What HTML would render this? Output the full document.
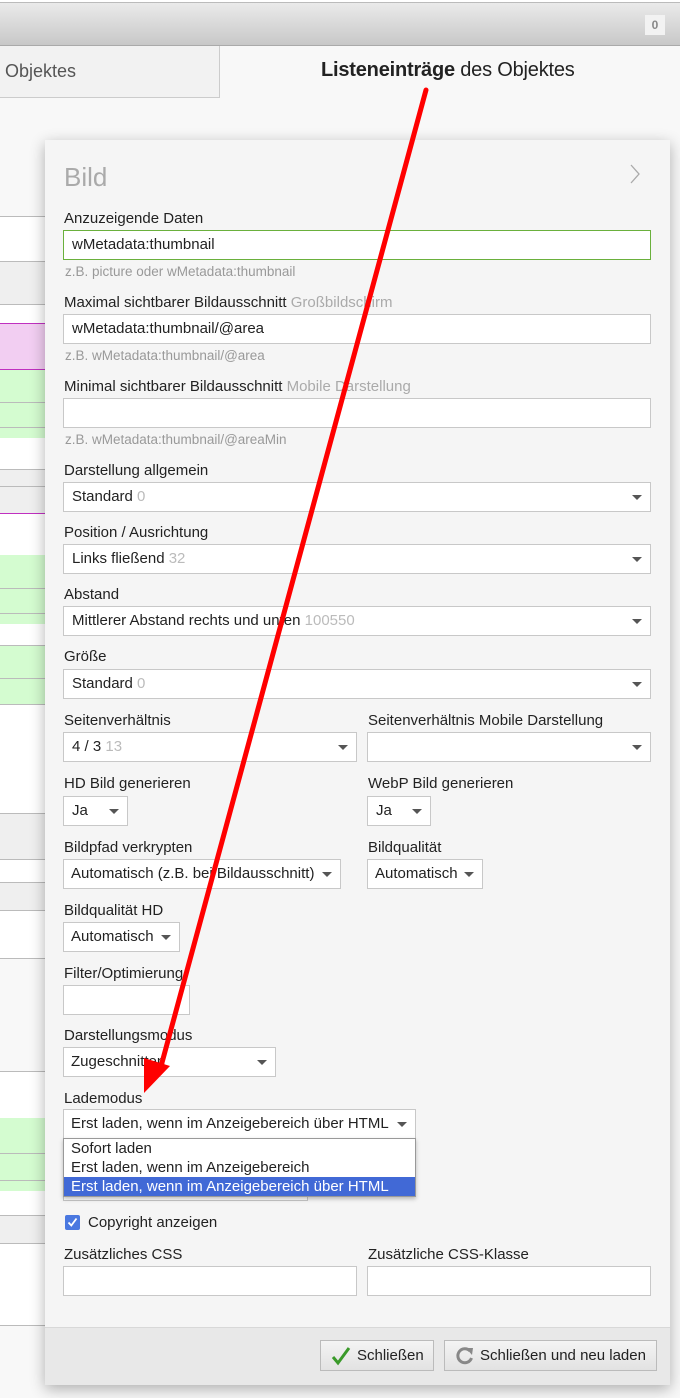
<!DOCTYPE html>
<html><head><meta charset="utf-8"><style>
*{box-sizing:border-box;margin:0;padding:0}
body{width:680px;height:1398px;overflow:hidden;background:#f8f8f8;font-family:"Liberation Sans",Arial,sans-serif;font-size:15px;color:#222;position:relative}
.a{position:absolute}
.row{position:absolute;left:0;width:60px}
.lbl{position:absolute;left:64px;font-size:15px;color:#222;white-space:nowrap}
.lbl span{color:#aaa}
.hint{position:absolute;left:65px;font-size:13.5px;color:#999}
.inp{position:absolute;height:30px;background:#fff;border:1px solid #c8c8c8;padding:0 8px;line-height:28px;font-size:15px;white-space:nowrap;overflow:hidden}
.inp span{color:#bbb}
.sel::after{content:"";position:absolute;right:8px;top:12px;border-left:5px solid transparent;border-right:5px solid transparent;border-top:5px solid #555}
.btn{position:absolute;top:1340px;height:31px;border:1px solid #bbb;background:linear-gradient(#f4f4f4,#e2e2e2);font-size:15px;line-height:29px;color:#222;white-space:nowrap}
</style></head><body>
<div class="row" style="top:97px;height:119px;background:#f8f8f8"></div>
<div class="row" style="top:216px;height:45px;background:#fff;border-top:1px solid #bbb"></div>
<div class="row" style="top:261px;height:43px;background:#efefef;border-top:1px solid #bbb"></div>
<div class="row" style="top:304px;height:19px;background:#fff;border-top:1px solid #bbb"></div>
<div class="row" style="top:323px;height:47px;background:#f2cef2;border-top:1px solid #c030c0;border-bottom:1px solid #c030c0"></div>
<div class="row" style="top:370px;height:33px;background:#d4fcd0;border-bottom:1px solid #bbb"></div>
<div class="row" style="top:403px;height:25px;background:#d4fcd0;border-bottom:1px solid #bbb"></div>
<div class="row" style="top:428px;height:10px;background:#d4fcd0"></div>
<div class="row" style="top:438px;height:31px;background:#fff"></div>
<div class="row" style="top:469px;height:17px;background:#efefef;border-top:1px solid #bbb"></div>
<div class="row" style="top:486px;height:27px;background:#efefef;border-top:1px solid #bbb"></div>
<div class="row" style="top:513px;height:42px;background:#fff;border-top:1px solid #c030c0"></div>
<div class="row" style="top:555px;height:34px;background:#d4fcd0;border-bottom:1px solid #bbb"></div>
<div class="row" style="top:589px;height:25px;background:#d4fcd0;border-bottom:1px solid #bbb"></div>
<div class="row" style="top:614px;height:10px;background:#d4fcd0"></div>
<div class="row" style="top:624px;height:21px;background:#fff"></div>
<div class="row" style="top:645px;height:34px;background:#d4fcd0;border-top:1px solid #bbb;border-bottom:1px solid #bbb"></div>
<div class="row" style="top:679px;height:26px;background:#d4fcd0;border-bottom:1px solid #bbb"></div>
<div class="row" style="top:705px;height:108px;background:#fff"></div>
<div class="row" style="top:813px;height:46px;background:#efefef;border-top:1px solid #bbb"></div>
<div class="row" style="top:859px;height:23px;background:#fff;border-top:1px solid #bbb"></div>
<div class="row" style="top:882px;height:28px;background:#efefef;border-top:1px solid #bbb"></div>
<div class="row" style="top:910px;height:48px;background:#fff;border-top:1px solid #bbb"></div>
<div class="row" style="top:958px;height:113px;background:#f8f8f8;border-top:1px solid #bbb"></div>
<div class="row" style="top:1071px;height:47px;background:#fff;border-top:1px solid #bbb"></div>
<div class="row" style="top:1118px;height:36px;background:#d4fcd0;border-bottom:1px solid #bbb"></div>
<div class="row" style="top:1154px;height:27px;background:#d4fcd0;border-bottom:1px solid #bbb"></div>
<div class="row" style="top:1181px;height:10px;background:#d4fcd0"></div>
<div class="row" style="top:1191px;height:24px;background:#fff"></div>
<div class="row" style="top:1215px;height:28px;background:#efefef;border-top:1px solid #bbb"></div>
<div class="row" style="top:1243px;height:82px;background:#fff;border-top:1px solid #bbb"></div>
<div class="row" style="top:1325px;height:73px;background:#f8f8f8;border-top:1px solid #bbb"></div>

<div class="a" style="left:0;top:0;width:680px;height:46px;background:linear-gradient(#eaeaea,#c8c8c8);border-top:3px solid #fff;border-bottom:1px solid #aaa"></div>
<div class="a" style="left:0;top:2px;width:680px;height:1px;background:#bbb"></div>
<div class="a" style="left:645px;top:15px;width:20px;height:20px;background:#f2f2f2;color:#888;font-size:12px;font-weight:bold;text-align:center;line-height:20px">0</div>
<div class="a" style="left:0;top:46px;width:220px;height:52px;background:#f2f2f2;border-right:1px solid #ccc;border-bottom:1px solid #ccc;font-size:18px;line-height:50px;padding-left:5px;color:#555">Objektes</div>
<div class="a" style="left:321px;top:59px;font-size:20px;color:#222;white-space:nowrap;letter-spacing:-0.2px"><b>Listeneinträge</b> des Objektes</div>

<div class="a" style="left:45px;top:140px;width:625px;height:1245px;background:#f5f5f5;box-shadow:0 4px 14px rgba(0,0,0,.3)"></div>
<div class="a" style="left:45px;top:1327px;width:625px;height:58px;background:#e8e8e8;border-top:1px solid #d8d8d8"></div>
<div class="a" style="left:64px;top:162px;font-size:26px;color:#aaa">Bild</div>
<svg class="a" style="left:628px;top:163px" width="14" height="22"><path d="M3 2 L11 11 L3 20" fill="none" stroke="#aaa" stroke-width="1.3"/></svg>

<div class="lbl" style="top:210px">Anzuzeigende Daten</div>
<div class="inp" style="left:63px;top:230px;width:588px;border-color:#6ab03c">wMetadata:thumbnail</div>
<div class="hint" style="top:264px">z.B. picture oder wMetadata:thumbnail</div>

<div class="lbl" style="top:294px">Maximal sichtbarer Bildausschnitt <span>Großbildschirm</span></div>
<div class="inp" style="left:63px;top:314px;width:588px">wMetadata:thumbnail/@area</div>
<div class="hint" style="top:348px">z.B. wMetadata:thumbnail/@area</div>

<div class="lbl" style="top:378px">Minimal sichtbarer Bildausschnitt <span>Mobile Darstellung</span></div>
<div class="inp" style="left:63px;top:398px;width:588px"></div>
<div class="hint" style="top:432px">z.B. wMetadata:thumbnail/@areaMin</div>

<div class="lbl" style="top:462px">Darstellung allgemein</div>
<div class="inp sel" style="left:63px;top:482px;width:588px">Standard <span>0</span></div>
<div class="lbl" style="top:524px">Position / Ausrichtung</div>
<div class="inp sel" style="left:63px;top:544px;width:588px">Links fließend <span>32</span></div>
<div class="lbl" style="top:586px">Abstand</div>
<div class="inp sel" style="left:63px;top:606px;width:588px">Mittlerer Abstand rechts und unten <span>100550</span></div>
<div class="lbl" style="top:648px">Größe</div>
<div class="inp sel" style="left:63px;top:669px;width:588px">Standard <span>0</span></div>

<div class="lbl" style="top:712px">Seitenverhältnis</div>
<div class="lbl" style="top:712px;left:368px">Seitenverhältnis Mobile Darstellung</div>
<div class="inp sel" style="left:63px;top:732px;width:294px">4 / 3 <span>13</span></div>
<div class="inp sel" style="left:367px;top:732px;width:284px"></div>

<div class="lbl" style="top:775px">HD Bild generieren</div>
<div class="lbl" style="top:775px;left:368px">WebP Bild generieren</div>
<div class="inp sel" style="left:63px;top:796px;width:65px">Ja</div>
<div class="inp sel" style="left:367px;top:796px;width:64px">Ja</div>

<div class="lbl" style="top:839px">Bildpfad verkrypten</div>
<div class="lbl" style="top:839px;left:368px">Bildqualität</div>
<div class="inp sel" style="left:63px;top:859px;width:278px;padding-left:7px;padding-right:20px">Automatisch (z.B. bei Bildausschnitt)</div>
<div class="inp sel" style="left:367px;top:859px;width:116px;padding-left:7px">Automatisch</div>

<div class="lbl" style="top:902px">Bildqualität HD</div>
<div class="inp sel" style="left:63px;top:922px;width:117px;padding-left:7px">Automatisch</div>
<div class="lbl" style="top:965px">Filter/Optimierung</div>
<div class="inp" style="left:63px;top:985px;width:127px"></div>
<div class="lbl" style="top:1027px">Darstellungsmodus</div>
<div class="inp sel" style="left:63px;top:1047px;width:213px;padding-left:7px">Zugeschnitten</div>
<div class="lbl" style="top:1090px">Lademodus</div>
<div class="inp" style="left:63px;top:1170px;width:245px;height:31px"></div>
<div class="inp sel" style="left:63px;top:1109px;width:353px;padding-left:7px">Erst laden, wenn im Anzeigebereich über HTML</div>
<div class="a" style="left:63px;top:1138px;width:353px;height:59px;background:#fff;border:1px solid #999;box-shadow:0 2px 4px rgba(0,0,0,.25);font-size:15px;line-height:19px">
<div style="padding-left:7px">Sofort laden</div>
<div style="padding-left:7px">Erst laden, wenn im Anzeigebereich</div>
<div style="padding-left:7px;background:#4169d6;color:#fff">Erst laden, wenn im Anzeigebereich über HTML</div>
</div>

<div class="a" style="left:65px;top:1215px;width:15px;height:15px;background:#4a78e0;border-radius:2px"></div>
<svg class="a" style="left:65px;top:1215px" width="15" height="15"><path d="M3.5 7.5 L6.3 10.5 L11.5 3.5" fill="none" stroke="#fff" stroke-width="1.8"/></svg>
<div class="lbl" style="top:1214px;left:88px">Copyright anzeigen</div>

<div class="lbl" style="top:1246px">Zusätzliches CSS</div>
<div class="lbl" style="top:1246px;left:368px">Zusätzliche CSS-Klasse</div>
<div class="inp" style="left:63px;top:1266px;width:294px"></div>
<div class="inp" style="left:367px;top:1266px;width:284px"></div>

<div class="btn" style="left:320px;width:114px;padding-left:36px">Schließen</div>
<svg class="a" style="left:331px;top:1346px" width="20" height="20"><path d="M2 11 L7 17 L18 2" fill="none" stroke="#3a9a2a" stroke-width="3"/></svg>
<div class="btn" style="left:444px;width:213px;padding-left:35px">Schließen und neu laden</div>
<svg class="a" style="left:454px;top:1345px" width="22" height="22"><path d="M16 6 A7 7 0 1 0 17.5 13" fill="none" stroke="#888" stroke-width="3"/><path d="M12 3 L19 3 L18 10 Z" fill="#888"/></svg>

<svg class="a" style="left:0;top:0" width="680" height="1398"><path d="M426 90 L160 1070" stroke="#f00" stroke-width="5" stroke-linecap="round"/><path d="M144 1093 L144 1058 L170 1066 Z" fill="#f00"/></svg>
</body></html>
